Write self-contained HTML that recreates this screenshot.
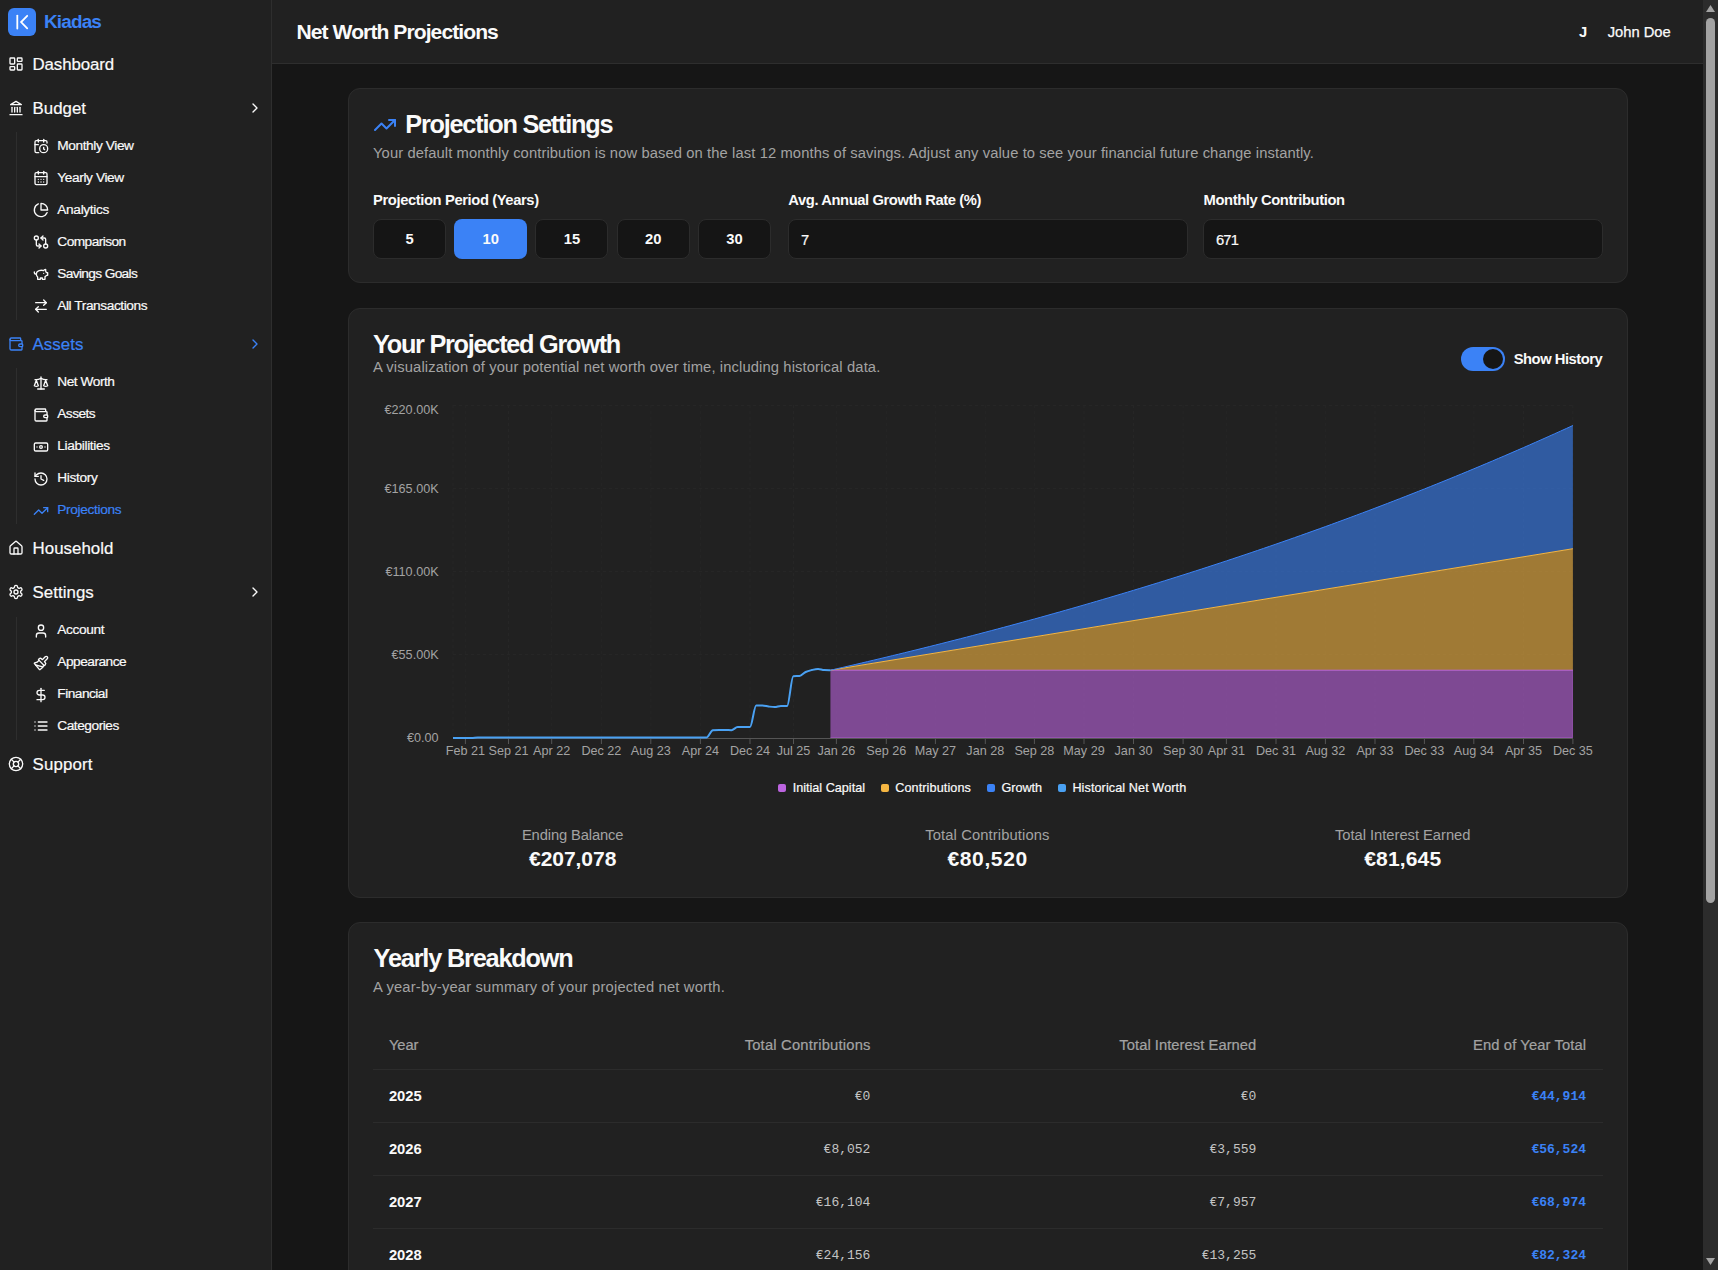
<!DOCTYPE html>
<html><head><meta charset="utf-8"><title>Net Worth Projections</title>
<style>
html,body{margin:0;padding:0;width:1718px;height:1270px;overflow:hidden;background:#161616;}
.r,.t,.i{position:absolute;}
.t{white-space:nowrap;}
</style></head><body>
<div class="r" style="left:0px;top:0px;width:271px;height:1270px;background:#212121;"></div><div class="r" style="left:271px;top:0px;width:1px;height:1270px;background:#2e2e2e;"></div><div class="r" style="left:8px;top:8px;width:28px;height:28px;background:#3b82f6;border-radius:6px;"></div><div class="r" style="left:16px;top:132px;width:1px;height:188px;background:#2e2e2e;"></div><div class="r" style="left:16px;top:368px;width:1px;height:156px;background:#2e2e2e;"></div><div class="r" style="left:16px;top:617px;width:1px;height:123px;background:#2e2e2e;"></div><div class="r" style="left:272px;top:0px;width:1431px;height:63px;background:#212121;"></div><div class="r" style="left:272px;top:63px;width:1431px;height:1px;background:#2e2e2e;"></div><div class="r" style="left:272px;top:64px;width:1431px;height:1206px;background:#161616;"></div><div class="r" style="left:1703px;top:0px;width:15px;height:1270px;background:#2c2c2c;"></div><div class="r" style="left:1706px;top:18px;width:9px;height:885px;background:#a3a3a3;border-radius:4.5px;"></div><svg class="i" style="left:1703px;top:0" width="15" height="1270"><polygon points="3,12 12,12 7.5,5" fill="#a3a3a3"/><polygon points="3,1258 12,1258 7.5,1265" fill="#a3a3a3"/></svg><div class="r" style="left:348px;top:88px;width:1280px;height:195px;background:#212121;border-radius:12px;border:1px solid #2c2c2c;box-sizing:border-box;"></div><div class="r" style="left:373px;top:219px;width:73px;height:40px;background:#151515;border-radius:8px;border:1px solid #2c2c2c;box-sizing:border-box;"></div><div class="r" style="left:454px;top:219px;width:73px;height:40px;background:#3b82f6;border-radius:8px;"></div><div class="r" style="left:535px;top:219px;width:73px;height:40px;background:#151515;border-radius:8px;border:1px solid #2c2c2c;box-sizing:border-box;"></div><div class="r" style="left:617px;top:219px;width:73px;height:40px;background:#151515;border-radius:8px;border:1px solid #2c2c2c;box-sizing:border-box;"></div><div class="r" style="left:698px;top:219px;width:73px;height:40px;background:#151515;border-radius:8px;border:1px solid #2c2c2c;box-sizing:border-box;"></div><div class="r" style="left:788px;top:219px;width:400px;height:40px;background:#151515;border-radius:8px;border:1px solid #2c2c2c;box-sizing:border-box;"></div><div class="r" style="left:1203px;top:219px;width:400px;height:40px;background:#151515;border-radius:8px;border:1px solid #2c2c2c;box-sizing:border-box;"></div><div class="r" style="left:348px;top:308px;width:1280px;height:590px;background:#212121;border-radius:12px;border:1px solid #2c2c2c;box-sizing:border-box;"></div><div class="r" style="left:1461px;top:347px;width:44px;height:24px;background:#3b82f6;border-radius:12px;"></div><div class="r" style="left:1483px;top:349px;width:20px;height:20px;background:#161616;border-radius:10px;"></div><svg class="i" style="left:0;top:0" width="1718" height="1270"><line x1="453" x2="1573" y1="405.5" y2="405.5" stroke="#262626" stroke-dasharray="3 3"/><line x1="453" x2="1573" y1="488.5" y2="488.5" stroke="#262626" stroke-dasharray="3 3"/><line x1="453" x2="1573" y1="571.5" y2="571.5" stroke="#262626" stroke-dasharray="3 3"/><line x1="453" x2="1573" y1="654.5" y2="654.5" stroke="#262626" stroke-dasharray="3 3"/><line x1="453.0" x2="453.0" y1="405" y2="738" stroke="#262626" stroke-dasharray="3 3"/><line x1="465.4" x2="465.4" y1="405" y2="738" stroke="#262626" stroke-dasharray="3 3"/><line x1="508.5" x2="508.5" y1="405" y2="738" stroke="#262626" stroke-dasharray="3 3"/><line x1="551.7" x2="551.7" y1="405" y2="738" stroke="#262626" stroke-dasharray="3 3"/><line x1="601.4" x2="601.4" y1="405" y2="738" stroke="#262626" stroke-dasharray="3 3"/><line x1="650.8" x2="650.8" y1="405" y2="738" stroke="#262626" stroke-dasharray="3 3"/><line x1="700.4" x2="700.4" y1="405" y2="738" stroke="#262626" stroke-dasharray="3 3"/><line x1="750.0" x2="750.0" y1="405" y2="738" stroke="#262626" stroke-dasharray="3 3"/><line x1="793.5" x2="793.5" y1="405" y2="738" stroke="#262626" stroke-dasharray="3 3"/><line x1="836.4" x2="836.4" y1="405" y2="738" stroke="#262626" stroke-dasharray="3 3"/><line x1="886.3" x2="886.3" y1="405" y2="738" stroke="#262626" stroke-dasharray="3 3"/><line x1="935.4" x2="935.4" y1="405" y2="738" stroke="#262626" stroke-dasharray="3 3"/><line x1="985.3" x2="985.3" y1="405" y2="738" stroke="#262626" stroke-dasharray="3 3"/><line x1="1034.4" x2="1034.4" y1="405" y2="738" stroke="#262626" stroke-dasharray="3 3"/><line x1="1084.0" x2="1084.0" y1="405" y2="738" stroke="#262626" stroke-dasharray="3 3"/><line x1="1133.5" x2="1133.5" y1="405" y2="738" stroke="#262626" stroke-dasharray="3 3"/><line x1="1183.1" x2="1183.1" y1="405" y2="738" stroke="#262626" stroke-dasharray="3 3"/><line x1="1226.4" x2="1226.4" y1="405" y2="738" stroke="#262626" stroke-dasharray="3 3"/><line x1="1276.0" x2="1276.0" y1="405" y2="738" stroke="#262626" stroke-dasharray="3 3"/><line x1="1325.4" x2="1325.4" y1="405" y2="738" stroke="#262626" stroke-dasharray="3 3"/><line x1="1375.0" x2="1375.0" y1="405" y2="738" stroke="#262626" stroke-dasharray="3 3"/><line x1="1424.4" x2="1424.4" y1="405" y2="738" stroke="#262626" stroke-dasharray="3 3"/><line x1="1473.8" x2="1473.8" y1="405" y2="738" stroke="#262626" stroke-dasharray="3 3"/><line x1="1523.5" x2="1523.5" y1="405" y2="738" stroke="#262626" stroke-dasharray="3 3"/><line x1="1572.9" x2="1572.9" y1="405" y2="738" stroke="#262626" stroke-dasharray="3 3"/><path d="M830.42,738 L830.42,670.22 L1572.90,670.22 L1572.90,738Z" fill="#bc64e0" fill-opacity="0.6"/><path d="M830.42,670.22 L830.42,670.22 L836.61,669.21 L842.80,668.20 L848.99,667.18 L855.17,666.17 L861.36,665.16 L867.55,664.15 L873.74,663.13 L879.92,662.12 L886.11,661.11 L892.30,660.09 L898.49,659.08 L904.67,658.07 L910.86,657.06 L917.05,656.04 L923.23,655.03 L929.42,654.02 L935.61,653.01 L941.80,651.99 L947.98,650.98 L954.17,649.97 L960.36,648.96 L966.55,647.94 L972.73,646.93 L978.92,645.92 L985.11,644.91 L991.29,643.89 L997.48,642.88 L1003.67,641.87 L1009.86,640.86 L1016.04,639.84 L1022.23,638.83 L1028.42,637.82 L1034.61,636.80 L1040.79,635.79 L1046.98,634.78 L1053.17,633.77 L1059.35,632.75 L1065.54,631.74 L1071.73,630.73 L1077.92,629.72 L1084.10,628.70 L1090.29,627.69 L1096.48,626.68 L1102.67,625.67 L1108.85,624.65 L1115.04,623.64 L1121.23,622.63 L1127.41,621.62 L1133.60,620.60 L1139.79,619.59 L1145.98,618.58 L1152.16,617.57 L1158.35,616.55 L1164.54,615.54 L1170.73,614.53 L1176.91,613.52 L1183.10,612.50 L1189.29,611.49 L1195.48,610.48 L1201.66,609.46 L1207.85,608.45 L1214.04,607.44 L1220.22,606.43 L1226.41,605.41 L1232.60,604.40 L1238.79,603.39 L1244.97,602.38 L1251.16,601.36 L1257.35,600.35 L1263.54,599.34 L1269.72,598.33 L1275.91,597.31 L1282.10,596.30 L1288.28,595.29 L1294.47,594.28 L1300.66,593.26 L1306.85,592.25 L1313.03,591.24 L1319.22,590.23 L1325.41,589.21 L1331.60,588.20 L1337.78,587.19 L1343.97,586.17 L1350.16,585.16 L1356.34,584.15 L1362.53,583.14 L1368.72,582.12 L1374.91,581.11 L1381.09,580.10 L1387.28,579.09 L1393.47,578.07 L1399.66,577.06 L1405.84,576.05 L1412.03,575.04 L1418.22,574.02 L1424.40,573.01 L1430.59,572.00 L1436.78,570.99 L1442.97,569.97 L1449.15,568.96 L1455.34,567.95 L1461.53,566.94 L1467.72,565.92 L1473.90,564.91 L1480.09,563.90 L1486.28,562.89 L1492.47,561.87 L1498.65,560.86 L1504.84,559.85 L1511.03,558.83 L1517.21,557.82 L1523.40,556.81 L1529.59,555.80 L1535.78,554.78 L1541.96,553.77 L1548.15,552.76 L1554.34,551.75 L1560.53,550.73 L1566.71,549.72 L1572.90,548.71 L1572.90,670.22Z" fill="#f5b642" fill-opacity="0.6"/><path d="M830.42,670.22C832.49,669.75 834.55,669.28 836.61,668.81C838.67,668.33 840.74,667.86 842.80,667.38C844.86,666.91 846.92,666.43 848.99,665.95C851.05,665.48 853.11,665.00 855.17,664.52C857.24,664.03 859.30,663.55 861.36,663.07C863.42,662.58 865.49,662.10 867.55,661.61C869.61,661.13 871.67,660.64 873.74,660.15C875.80,659.66 877.86,659.17 879.92,658.68C881.99,658.18 884.05,657.69 886.11,657.19C888.17,656.70 890.24,656.20 892.30,655.70C894.36,655.21 896.42,654.71 898.49,654.21C900.55,653.71 902.61,653.20 904.67,652.70C906.73,652.20 908.80,651.69 910.86,651.18C912.92,650.68 914.98,650.17 917.05,649.66C919.11,649.15 921.17,648.64 923.23,648.12C925.30,647.61 927.36,647.10 929.42,646.58C931.48,646.07 933.55,645.55 935.61,645.03C937.67,644.51 939.73,643.99 941.80,643.47C943.86,642.95 945.92,642.42 947.98,641.90C950.05,641.37 952.11,640.85 954.17,640.32C956.23,639.79 958.30,639.26 960.36,638.73C962.42,638.20 964.48,637.67 966.55,637.13C968.61,636.60 970.67,636.06 972.73,635.53C974.80,634.99 976.86,634.45 978.92,633.91C980.98,633.37 983.04,632.83 985.11,632.28C987.17,631.74 989.23,631.20 991.29,630.65C993.36,630.10 995.42,629.55 997.48,629.01C999.54,628.46 1001.61,627.90 1003.67,627.35C1005.73,626.80 1007.79,626.24 1009.86,625.69C1011.92,625.13 1013.98,624.57 1016.04,624.01C1018.11,623.45 1020.17,622.89 1022.23,622.33C1024.29,621.77 1026.36,621.20 1028.42,620.64C1030.48,620.07 1032.54,619.50 1034.61,618.93C1036.67,618.36 1038.73,617.79 1040.79,617.22C1042.86,616.65 1044.92,616.07 1046.98,615.50C1049.04,614.92 1051.10,614.34 1053.17,613.76C1055.23,613.18 1057.29,612.60 1059.35,612.02C1061.42,611.44 1063.48,610.85 1065.54,610.27C1067.60,609.68 1069.67,609.09 1071.73,608.50C1073.79,607.91 1075.85,607.32 1077.92,606.73C1079.98,606.14 1082.04,605.54 1084.10,604.95C1086.17,604.35 1088.23,603.75 1090.29,603.15C1092.35,602.55 1094.42,601.95 1096.48,601.35C1098.54,600.74 1100.60,600.14 1102.67,599.53C1104.73,598.92 1106.79,598.31 1108.85,597.70C1110.92,597.09 1112.98,596.48 1115.04,595.87C1117.10,595.25 1119.17,594.64 1121.23,594.02C1123.29,593.40 1125.35,592.78 1127.41,592.16C1129.48,591.54 1131.54,590.92 1133.60,590.29C1135.66,589.67 1137.73,589.04 1139.79,588.41C1141.85,587.78 1143.91,587.15 1145.98,586.52C1148.04,585.89 1150.10,585.25 1152.16,584.62C1154.23,583.98 1156.29,583.34 1158.35,582.71C1160.41,582.07 1162.48,581.42 1164.54,580.78C1166.60,580.14 1168.66,579.49 1170.73,578.85C1172.79,578.20 1174.85,577.55 1176.91,576.90C1178.98,576.25 1181.04,575.59 1183.10,574.94C1185.16,574.29 1187.23,573.63 1189.29,572.97C1191.35,572.31 1193.41,571.65 1195.48,570.99C1197.54,570.33 1199.60,569.66 1201.66,569.00C1203.72,568.33 1205.79,567.66 1207.85,566.99C1209.91,566.32 1211.97,565.65 1214.04,564.98C1216.10,564.30 1218.16,563.63 1220.22,562.95C1222.29,562.27 1224.35,561.59 1226.41,560.91C1228.47,560.23 1230.54,559.54 1232.60,558.86C1234.66,558.17 1236.72,557.48 1238.79,556.79C1240.85,556.10 1242.91,555.41 1244.97,554.72C1247.04,554.02 1249.10,553.33 1251.16,552.63C1253.22,551.93 1255.29,551.23 1257.35,550.53C1259.41,549.83 1261.47,549.12 1263.54,548.42C1265.60,547.71 1267.66,547.00 1269.72,546.29C1271.79,545.58 1273.85,544.87 1275.91,544.16C1277.97,543.44 1280.03,542.73 1282.10,542.01C1284.16,541.29 1286.22,540.57 1288.28,539.85C1290.35,539.12 1292.41,538.40 1294.47,537.67C1296.53,536.94 1298.60,536.22 1300.66,535.48C1302.72,534.75 1304.78,534.02 1306.85,533.28C1308.91,532.55 1310.97,531.81 1313.03,531.07C1315.10,530.33 1317.16,529.59 1319.22,528.85C1321.28,528.10 1323.35,527.36 1325.41,526.61C1327.47,525.86 1329.53,525.11 1331.60,524.36C1333.66,523.60 1335.72,522.85 1337.78,522.09C1339.85,521.33 1341.91,520.58 1343.97,519.81C1346.03,519.05 1348.10,518.29 1350.16,517.52C1352.22,516.76 1354.28,515.99 1356.34,515.22C1358.41,514.45 1360.47,513.67 1362.53,512.90C1364.59,512.12 1366.66,511.35 1368.72,510.57C1370.78,509.79 1372.84,509.01 1374.91,508.22C1376.97,507.44 1379.03,506.65 1381.09,505.86C1383.16,505.08 1385.22,504.28 1387.28,503.49C1389.34,502.70 1391.41,501.90 1393.47,501.10C1395.53,500.31 1397.59,499.51 1399.66,498.70C1401.72,497.90 1403.78,497.10 1405.84,496.29C1407.91,495.48 1409.97,494.67 1412.03,493.86C1414.09,493.05 1416.16,492.24 1418.22,491.42C1420.28,490.60 1422.34,489.78 1424.40,488.96C1426.47,488.14 1428.53,487.32 1430.59,486.49C1432.65,485.66 1434.72,484.84 1436.78,484.01C1438.84,483.17 1440.90,482.34 1442.97,481.51C1445.03,480.67 1447.09,479.83 1449.15,478.99C1451.22,478.15 1453.28,477.31 1455.34,476.46C1457.40,475.62 1459.47,474.77 1461.53,473.92C1463.59,473.07 1465.65,472.21 1467.72,471.36C1469.78,470.50 1471.84,469.64 1473.90,468.78C1475.97,467.92 1478.03,467.06 1480.09,466.20C1482.15,465.33 1484.22,464.46 1486.28,463.59C1488.34,462.72 1490.40,461.85 1492.47,460.97C1494.53,460.10 1496.59,459.22 1498.65,458.34C1500.71,457.46 1502.78,456.57 1504.84,455.69C1506.90,454.80 1508.96,453.91 1511.03,453.02C1513.09,452.13 1515.15,451.24 1517.21,450.34C1519.28,449.44 1521.34,448.55 1523.40,447.64C1525.46,446.74 1527.53,445.84 1529.59,444.93C1531.65,444.03 1533.71,443.12 1535.78,442.20C1537.84,441.29 1539.90,440.38 1541.96,439.46C1544.03,438.54 1546.09,437.62 1548.15,436.70C1550.21,435.78 1552.28,434.85 1554.34,433.92C1556.40,433.00 1558.46,432.07 1560.53,431.13C1562.59,430.20 1564.65,429.26 1566.71,428.32C1568.78,427.38 1570.84,426.44 1572.90,425.50 L1572.90,548.71 L1566.71,549.72 L1560.53,550.73 L1554.34,551.75 L1548.15,552.76 L1541.96,553.77 L1535.78,554.78 L1529.59,555.80 L1523.40,556.81 L1517.21,557.82 L1511.03,558.83 L1504.84,559.85 L1498.65,560.86 L1492.47,561.87 L1486.28,562.89 L1480.09,563.90 L1473.90,564.91 L1467.72,565.92 L1461.53,566.94 L1455.34,567.95 L1449.15,568.96 L1442.97,569.97 L1436.78,570.99 L1430.59,572.00 L1424.40,573.01 L1418.22,574.02 L1412.03,575.04 L1405.84,576.05 L1399.66,577.06 L1393.47,578.07 L1387.28,579.09 L1381.09,580.10 L1374.91,581.11 L1368.72,582.12 L1362.53,583.14 L1356.34,584.15 L1350.16,585.16 L1343.97,586.17 L1337.78,587.19 L1331.60,588.20 L1325.41,589.21 L1319.22,590.23 L1313.03,591.24 L1306.85,592.25 L1300.66,593.26 L1294.47,594.28 L1288.28,595.29 L1282.10,596.30 L1275.91,597.31 L1269.72,598.33 L1263.54,599.34 L1257.35,600.35 L1251.16,601.36 L1244.97,602.38 L1238.79,603.39 L1232.60,604.40 L1226.41,605.41 L1220.22,606.43 L1214.04,607.44 L1207.85,608.45 L1201.66,609.46 L1195.48,610.48 L1189.29,611.49 L1183.10,612.50 L1176.91,613.52 L1170.73,614.53 L1164.54,615.54 L1158.35,616.55 L1152.16,617.57 L1145.98,618.58 L1139.79,619.59 L1133.60,620.60 L1127.41,621.62 L1121.23,622.63 L1115.04,623.64 L1108.85,624.65 L1102.67,625.67 L1096.48,626.68 L1090.29,627.69 L1084.10,628.70 L1077.92,629.72 L1071.73,630.73 L1065.54,631.74 L1059.35,632.75 L1053.17,633.77 L1046.98,634.78 L1040.79,635.79 L1034.61,636.80 L1028.42,637.82 L1022.23,638.83 L1016.04,639.84 L1009.86,640.86 L1003.67,641.87 L997.48,642.88 L991.29,643.89 L985.11,644.91 L978.92,645.92 L972.73,646.93 L966.55,647.94 L960.36,648.96 L954.17,649.97 L947.98,650.98 L941.80,651.99 L935.61,653.01 L929.42,654.02 L923.23,655.03 L917.05,656.04 L910.86,657.06 L904.67,658.07 L898.49,659.08 L892.30,660.09 L886.11,661.11 L879.92,662.12 L873.74,663.13 L867.55,664.15 L861.36,665.16 L855.17,666.17 L848.99,667.18 L842.80,668.20 L836.61,669.21 L830.42,670.22Z" fill="#3b82f6" fill-opacity="0.6"/><path d="M830.42,670.22 L1572.90,670.22" stroke="#bc64e0" stroke-width="1" fill="none"/><path d="M1572.40,670.22 L1572.40,737.5 L830.42,737.5" stroke="#bc64e0" stroke-opacity="0.35" stroke-width="1" fill="none"/><path d="M830.42,670.22 L1572.90,548.71" stroke="#f5b642" stroke-width="1" fill="none"/><path d="M830.42,670.22C832.49,669.75 834.55,669.28 836.61,668.81C838.67,668.33 840.74,667.86 842.80,667.38C844.86,666.91 846.92,666.43 848.99,665.95C851.05,665.48 853.11,665.00 855.17,664.52C857.24,664.03 859.30,663.55 861.36,663.07C863.42,662.58 865.49,662.10 867.55,661.61C869.61,661.13 871.67,660.64 873.74,660.15C875.80,659.66 877.86,659.17 879.92,658.68C881.99,658.18 884.05,657.69 886.11,657.19C888.17,656.70 890.24,656.20 892.30,655.70C894.36,655.21 896.42,654.71 898.49,654.21C900.55,653.71 902.61,653.20 904.67,652.70C906.73,652.20 908.80,651.69 910.86,651.18C912.92,650.68 914.98,650.17 917.05,649.66C919.11,649.15 921.17,648.64 923.23,648.12C925.30,647.61 927.36,647.10 929.42,646.58C931.48,646.07 933.55,645.55 935.61,645.03C937.67,644.51 939.73,643.99 941.80,643.47C943.86,642.95 945.92,642.42 947.98,641.90C950.05,641.37 952.11,640.85 954.17,640.32C956.23,639.79 958.30,639.26 960.36,638.73C962.42,638.20 964.48,637.67 966.55,637.13C968.61,636.60 970.67,636.06 972.73,635.53C974.80,634.99 976.86,634.45 978.92,633.91C980.98,633.37 983.04,632.83 985.11,632.28C987.17,631.74 989.23,631.20 991.29,630.65C993.36,630.10 995.42,629.55 997.48,629.01C999.54,628.46 1001.61,627.90 1003.67,627.35C1005.73,626.80 1007.79,626.24 1009.86,625.69C1011.92,625.13 1013.98,624.57 1016.04,624.01C1018.11,623.45 1020.17,622.89 1022.23,622.33C1024.29,621.77 1026.36,621.20 1028.42,620.64C1030.48,620.07 1032.54,619.50 1034.61,618.93C1036.67,618.36 1038.73,617.79 1040.79,617.22C1042.86,616.65 1044.92,616.07 1046.98,615.50C1049.04,614.92 1051.10,614.34 1053.17,613.76C1055.23,613.18 1057.29,612.60 1059.35,612.02C1061.42,611.44 1063.48,610.85 1065.54,610.27C1067.60,609.68 1069.67,609.09 1071.73,608.50C1073.79,607.91 1075.85,607.32 1077.92,606.73C1079.98,606.14 1082.04,605.54 1084.10,604.95C1086.17,604.35 1088.23,603.75 1090.29,603.15C1092.35,602.55 1094.42,601.95 1096.48,601.35C1098.54,600.74 1100.60,600.14 1102.67,599.53C1104.73,598.92 1106.79,598.31 1108.85,597.70C1110.92,597.09 1112.98,596.48 1115.04,595.87C1117.10,595.25 1119.17,594.64 1121.23,594.02C1123.29,593.40 1125.35,592.78 1127.41,592.16C1129.48,591.54 1131.54,590.92 1133.60,590.29C1135.66,589.67 1137.73,589.04 1139.79,588.41C1141.85,587.78 1143.91,587.15 1145.98,586.52C1148.04,585.89 1150.10,585.25 1152.16,584.62C1154.23,583.98 1156.29,583.34 1158.35,582.71C1160.41,582.07 1162.48,581.42 1164.54,580.78C1166.60,580.14 1168.66,579.49 1170.73,578.85C1172.79,578.20 1174.85,577.55 1176.91,576.90C1178.98,576.25 1181.04,575.59 1183.10,574.94C1185.16,574.29 1187.23,573.63 1189.29,572.97C1191.35,572.31 1193.41,571.65 1195.48,570.99C1197.54,570.33 1199.60,569.66 1201.66,569.00C1203.72,568.33 1205.79,567.66 1207.85,566.99C1209.91,566.32 1211.97,565.65 1214.04,564.98C1216.10,564.30 1218.16,563.63 1220.22,562.95C1222.29,562.27 1224.35,561.59 1226.41,560.91C1228.47,560.23 1230.54,559.54 1232.60,558.86C1234.66,558.17 1236.72,557.48 1238.79,556.79C1240.85,556.10 1242.91,555.41 1244.97,554.72C1247.04,554.02 1249.10,553.33 1251.16,552.63C1253.22,551.93 1255.29,551.23 1257.35,550.53C1259.41,549.83 1261.47,549.12 1263.54,548.42C1265.60,547.71 1267.66,547.00 1269.72,546.29C1271.79,545.58 1273.85,544.87 1275.91,544.16C1277.97,543.44 1280.03,542.73 1282.10,542.01C1284.16,541.29 1286.22,540.57 1288.28,539.85C1290.35,539.12 1292.41,538.40 1294.47,537.67C1296.53,536.94 1298.60,536.22 1300.66,535.48C1302.72,534.75 1304.78,534.02 1306.85,533.28C1308.91,532.55 1310.97,531.81 1313.03,531.07C1315.10,530.33 1317.16,529.59 1319.22,528.85C1321.28,528.10 1323.35,527.36 1325.41,526.61C1327.47,525.86 1329.53,525.11 1331.60,524.36C1333.66,523.60 1335.72,522.85 1337.78,522.09C1339.85,521.33 1341.91,520.58 1343.97,519.81C1346.03,519.05 1348.10,518.29 1350.16,517.52C1352.22,516.76 1354.28,515.99 1356.34,515.22C1358.41,514.45 1360.47,513.67 1362.53,512.90C1364.59,512.12 1366.66,511.35 1368.72,510.57C1370.78,509.79 1372.84,509.01 1374.91,508.22C1376.97,507.44 1379.03,506.65 1381.09,505.86C1383.16,505.08 1385.22,504.28 1387.28,503.49C1389.34,502.70 1391.41,501.90 1393.47,501.10C1395.53,500.31 1397.59,499.51 1399.66,498.70C1401.72,497.90 1403.78,497.10 1405.84,496.29C1407.91,495.48 1409.97,494.67 1412.03,493.86C1414.09,493.05 1416.16,492.24 1418.22,491.42C1420.28,490.60 1422.34,489.78 1424.40,488.96C1426.47,488.14 1428.53,487.32 1430.59,486.49C1432.65,485.66 1434.72,484.84 1436.78,484.01C1438.84,483.17 1440.90,482.34 1442.97,481.51C1445.03,480.67 1447.09,479.83 1449.15,478.99C1451.22,478.15 1453.28,477.31 1455.34,476.46C1457.40,475.62 1459.47,474.77 1461.53,473.92C1463.59,473.07 1465.65,472.21 1467.72,471.36C1469.78,470.50 1471.84,469.64 1473.90,468.78C1475.97,467.92 1478.03,467.06 1480.09,466.20C1482.15,465.33 1484.22,464.46 1486.28,463.59C1488.34,462.72 1490.40,461.85 1492.47,460.97C1494.53,460.10 1496.59,459.22 1498.65,458.34C1500.71,457.46 1502.78,456.57 1504.84,455.69C1506.90,454.80 1508.96,453.91 1511.03,453.02C1513.09,452.13 1515.15,451.24 1517.21,450.34C1519.28,449.44 1521.34,448.55 1523.40,447.64C1525.46,446.74 1527.53,445.84 1529.59,444.93C1531.65,444.03 1533.71,443.12 1535.78,442.20C1537.84,441.29 1539.90,440.38 1541.96,439.46C1544.03,438.54 1546.09,437.62 1548.15,436.70C1550.21,435.78 1552.28,434.85 1554.34,433.92C1556.40,433.00 1558.46,432.07 1560.53,431.13C1562.59,430.20 1564.65,429.26 1566.71,428.32C1568.78,427.38 1570.84,426.44 1572.90,425.50" stroke="#3b82f6" stroke-width="1" fill="none"/><line x1="453" x2="1573" y1="738.5" y2="738.5" stroke="#555" stroke-width="1"/><line x1="465.4" x2="465.4" y1="739" y2="744" stroke="#555" stroke-width="1"/><line x1="508.5" x2="508.5" y1="739" y2="744" stroke="#555" stroke-width="1"/><line x1="551.7" x2="551.7" y1="739" y2="744" stroke="#555" stroke-width="1"/><line x1="601.4" x2="601.4" y1="739" y2="744" stroke="#555" stroke-width="1"/><line x1="650.8" x2="650.8" y1="739" y2="744" stroke="#555" stroke-width="1"/><line x1="700.4" x2="700.4" y1="739" y2="744" stroke="#555" stroke-width="1"/><line x1="750.0" x2="750.0" y1="739" y2="744" stroke="#555" stroke-width="1"/><line x1="793.5" x2="793.5" y1="739" y2="744" stroke="#555" stroke-width="1"/><line x1="836.4" x2="836.4" y1="739" y2="744" stroke="#555" stroke-width="1"/><line x1="886.3" x2="886.3" y1="739" y2="744" stroke="#555" stroke-width="1"/><line x1="935.4" x2="935.4" y1="739" y2="744" stroke="#555" stroke-width="1"/><line x1="985.3" x2="985.3" y1="739" y2="744" stroke="#555" stroke-width="1"/><line x1="1034.4" x2="1034.4" y1="739" y2="744" stroke="#555" stroke-width="1"/><line x1="1084.0" x2="1084.0" y1="739" y2="744" stroke="#555" stroke-width="1"/><line x1="1133.5" x2="1133.5" y1="739" y2="744" stroke="#555" stroke-width="1"/><line x1="1183.1" x2="1183.1" y1="739" y2="744" stroke="#555" stroke-width="1"/><line x1="1226.4" x2="1226.4" y1="739" y2="744" stroke="#555" stroke-width="1"/><line x1="1276.0" x2="1276.0" y1="739" y2="744" stroke="#555" stroke-width="1"/><line x1="1325.4" x2="1325.4" y1="739" y2="744" stroke="#555" stroke-width="1"/><line x1="1375.0" x2="1375.0" y1="739" y2="744" stroke="#555" stroke-width="1"/><line x1="1424.4" x2="1424.4" y1="739" y2="744" stroke="#555" stroke-width="1"/><line x1="1473.8" x2="1473.8" y1="739" y2="744" stroke="#555" stroke-width="1"/><line x1="1523.5" x2="1523.5" y1="739" y2="744" stroke="#555" stroke-width="1"/><line x1="1572.9" x2="1572.9" y1="739" y2="744" stroke="#555" stroke-width="1"/><path d="M453.00,738.00C455.06,738.00 457.12,738.00 459.19,738.00C461.25,738.00 463.31,738.00 465.37,738.00C467.44,738.00 469.50,738.00 471.56,738.00C473.62,738.00 475.69,737.60 477.75,737.60C479.81,737.60 481.87,737.60 483.94,737.60C486.00,737.60 488.06,737.60 490.12,737.60C492.19,737.60 494.25,737.60 496.31,737.60C498.37,737.60 500.44,737.60 502.50,737.60C504.56,737.60 506.62,737.60 508.69,737.60C510.75,737.60 512.81,737.60 514.87,737.60C516.94,737.60 519.00,737.60 521.06,737.60C523.12,737.60 525.19,737.60 527.25,737.60C529.31,737.60 531.37,737.60 533.43,737.60C535.50,737.60 537.56,737.60 539.62,737.60C541.68,737.60 543.75,737.60 545.81,737.60C547.87,737.60 549.93,737.60 552.00,737.60C554.06,737.60 556.12,737.60 558.18,737.60C560.25,737.60 562.31,737.60 564.37,737.60C566.43,737.60 568.50,737.60 570.56,737.60C572.62,737.60 574.68,737.60 576.75,737.60C578.81,737.60 580.87,737.60 582.93,737.60C585.00,737.60 587.06,737.60 589.12,737.60C591.18,737.60 593.25,737.60 595.31,737.60C597.37,737.60 599.43,737.60 601.50,737.60C603.56,737.60 605.62,737.60 607.68,737.60C609.74,737.60 611.81,737.60 613.87,737.60C615.93,737.60 617.99,737.60 620.06,737.60C622.12,737.60 624.18,737.60 626.24,737.60C628.31,737.60 630.37,737.60 632.43,737.60C634.49,737.60 636.56,737.60 638.62,737.60C640.68,737.60 642.74,737.60 644.81,737.60C646.87,737.60 648.93,737.60 650.99,737.60C653.06,737.60 655.12,737.60 657.18,737.60C659.24,737.60 661.31,737.60 663.37,737.60C665.43,737.60 667.49,737.60 669.56,737.60C671.62,737.60 673.68,737.60 675.74,737.60C677.80,737.60 679.87,737.60 681.93,737.60C683.99,737.60 686.05,737.60 688.12,737.60C690.18,737.60 692.24,737.60 694.30,737.60C696.37,737.60 698.43,737.60 700.49,737.60C702.55,737.60 704.62,737.57 706.68,737.50C708.74,737.43 710.80,730.33 712.87,730.20C714.93,730.07 716.99,730.00 719.05,730.00C721.12,730.00 723.18,730.00 725.24,730.00C727.30,730.00 729.37,730.20 731.43,730.20C733.49,730.20 735.55,727.00 737.62,727.00C739.68,727.00 741.74,727.00 743.80,727.00C745.87,727.00 747.93,727.00 749.99,727.00C752.05,727.00 754.11,705.50 756.18,705.50C758.24,705.50 760.30,705.50 762.36,705.50C764.43,705.50 766.49,706.23 768.55,706.50C770.61,706.77 772.68,707.10 774.74,707.10C776.80,707.10 778.86,706.00 780.93,706.00C782.99,706.00 785.05,706.00 787.11,706.00C789.18,706.00 791.24,676.33 793.30,676.20C795.36,676.07 797.43,676.13 799.49,676.00C801.55,675.87 803.61,673.00 805.68,672.00C807.74,671.00 809.80,670.52 811.86,670.00C813.93,669.48 815.99,668.90 818.05,668.90C820.11,668.90 822.18,670.03 824.24,670.10C826.30,670.17 828.36,670.18 830.42,670.20" stroke="#4aa1f3" stroke-width="2" fill="none"/></svg><div class="r" style="left:778px;top:784px;width:8px;height:8px;background:#bc64e0;border-radius:2px;"></div><div class="r" style="left:881px;top:784px;width:8px;height:8px;background:#f5b642;border-radius:2px;"></div><div class="r" style="left:987px;top:784px;width:8px;height:8px;background:#3b82f6;border-radius:2px;"></div><div class="r" style="left:1058px;top:784px;width:8px;height:8px;background:#4aa1f3;border-radius:2px;"></div><div class="r" style="left:348px;top:922px;width:1280px;height:478px;background:#212121;border-radius:12px;border:1px solid #2c2c2c;box-sizing:border-box;"></div><div class="r" style="left:373px;top:1069px;width:1230px;height:1px;background:#2c2c2c;"></div><div class="r" style="left:373px;top:1122px;width:1230px;height:1px;background:#2c2c2c;"></div><div class="r" style="left:373px;top:1175px;width:1230px;height:1px;background:#2c2c2c;"></div><div class="r" style="left:373px;top:1228px;width:1230px;height:1px;background:#2c2c2c;"></div>
<svg class="i" style="left:8px;top:8px" width="28" height="28" viewBox="0 0 28 28" fill="none" stroke="#fff" stroke-width="1.8" stroke-linecap="round" stroke-linejoin="miter"><path d="M9.3 7.6v13"/><path d="M19.2 7.8 13.1 14.1l6.1 6.3"/></svg><svg class="i" style="left:8px;top:56px" width="16" height="16" viewBox="0 0 24 24" fill="none" stroke="#fafafa" stroke-width="2" stroke-linecap="round" stroke-linejoin="round"><rect width="7" height="9" x="3" y="3" rx="1"/><rect width="7" height="5" x="14" y="3" rx="1"/><rect width="7" height="9" x="14" y="12" rx="1"/><rect width="7" height="5" x="3" y="16" rx="1"/></svg><svg class="i" style="left:8px;top:100px" width="16" height="16" viewBox="0 0 24 24" fill="none" stroke="#fafafa" stroke-width="2" stroke-linecap="round" stroke-linejoin="round"><line x1="3" x2="21" y1="22" y2="22"/><line x1="6" x2="6" y1="18" y2="11"/><line x1="10" x2="10" y1="18" y2="11"/><line x1="14" x2="14" y1="18" y2="11"/><line x1="18" x2="18" y1="18" y2="11"/><polygon points="12 2 20 7 4 7"/></svg><svg class="i" style="left:247px;top:100px" width="16" height="16" viewBox="0 0 24 24" fill="none" stroke="#fafafa" stroke-width="2" stroke-linecap="round" stroke-linejoin="round"><path d="m9 18 6-6-6-6"/></svg><svg class="i" style="left:33px;top:138px" width="16" height="16" viewBox="0 0 24 24" fill="none" stroke="#fafafa" stroke-width="2" stroke-linecap="round" stroke-linejoin="round"><path d="M21 7.5V6a2 2 0 0 0-2-2H5a2 2 0 0 0-2 2v14a2 2 0 0 0 2 2h3.5"/><path d="M16 2v4"/><path d="M8 2v4"/><path d="M3 10h5"/><path d="M17.5 17.5 16 16.3V14"/><circle cx="16" cy="16" r="6"/></svg><svg class="i" style="left:33px;top:170px" width="16" height="16" viewBox="0 0 24 24" fill="none" stroke="#fafafa" stroke-width="2" stroke-linecap="round" stroke-linejoin="round"><rect width="18" height="18" x="3" y="4" rx="2"/><path d="M16 2v4"/><path d="M8 2v4"/><path d="M3 10h18"/><path d="M8 14h.01"/><path d="M12 14h.01"/><path d="M16 14h.01"/><path d="M8 18h.01"/><path d="M12 18h.01"/><path d="M16 18h.01"/></svg><svg class="i" style="left:33px;top:202px" width="16" height="16" viewBox="0 0 24 24" fill="none" stroke="#fafafa" stroke-width="2" stroke-linecap="round" stroke-linejoin="round"><path d="M21.21 15.89A10 10 0 1 1 8 2.83"/><path d="M22 12A10 10 0 0 0 12 2v10z"/></svg><svg class="i" style="left:33px;top:234px" width="16" height="16" viewBox="0 0 24 24" fill="none" stroke="#fafafa" stroke-width="2" stroke-linecap="round" stroke-linejoin="round"><circle cx="5" cy="6" r="3"/><path d="M12 6h5a2 2 0 0 1 2 2v7"/><path d="m15 9-3-3 3-3"/><circle cx="19" cy="18" r="3"/><path d="M12 18H7a2 2 0 0 1-2-2V9"/><path d="m9 15 3 3-3 3"/></svg><svg class="i" style="left:33px;top:266px" width="16" height="16" viewBox="0 0 24 24" fill="none" stroke="#fafafa" stroke-width="2" stroke-linecap="round" stroke-linejoin="round"><path d="M19 5c-1.5 0-2.8 1.4-3 2-3.5-1.5-11-.3-11 5 0 1.8 0 3 2 4.5V20h4v-2h3v2h4v-4c1-.5 1.7-1 2-2h2v-4h-2c0-1-.5-1.5-1-2V5z"/><path d="M2 9v1c0 1.1.9 2 2 2h1"/><path d="M16 11h.01"/></svg><svg class="i" style="left:33px;top:298px" width="16" height="16" viewBox="0 0 24 24" fill="none" stroke="#fafafa" stroke-width="2" stroke-linecap="round" stroke-linejoin="round"><path d="m16 3 4 4-4 4"/><path d="M20 7H4"/><path d="m8 21-4-4 4-4"/><path d="M4 17h16"/></svg><svg class="i" style="left:8px;top:336px" width="16" height="16" viewBox="0 0 24 24" fill="none" stroke="#3b82f6" stroke-width="2" stroke-linecap="round" stroke-linejoin="round"><path d="M19 7V4a1 1 0 0 0-1-1H5a2 2 0 0 0 0 4h15a1 1 0 0 1 1 1v4h-3a2 2 0 0 0 0 4h3a1 1 0 0 0 1-1v-2a1 1 0 0 0-1-1"/><path d="M3 5v14a2 2 0 0 0 2 2h15a1 1 0 0 0 1-1v-4"/></svg><svg class="i" style="left:247px;top:336px" width="16" height="16" viewBox="0 0 24 24" fill="none" stroke="#3b82f6" stroke-width="2" stroke-linecap="round" stroke-linejoin="round"><path d="m9 18 6-6-6-6"/></svg><svg class="i" style="left:33px;top:375px" width="16" height="16" viewBox="0 0 24 24" fill="none" stroke="#fafafa" stroke-width="2" stroke-linecap="round" stroke-linejoin="round"><path d="m16 16 3-8 3 8c-.87.65-1.92 1-3 1s-2.13-.35-3-1Z"/><path d="m2 16 3-8 3 8c-.87.65-1.92 1-3 1s-2.13-.35-3-1Z"/><path d="M7 21h10"/><path d="M12 3v18"/><path d="M3 7h2c2 0 5-1 7-2 2 1 5 2 7 2h2"/></svg><svg class="i" style="left:33px;top:407px" width="16" height="16" viewBox="0 0 24 24" fill="none" stroke="#fafafa" stroke-width="2" stroke-linecap="round" stroke-linejoin="round"><path d="M19 7V4a1 1 0 0 0-1-1H5a2 2 0 0 0 0 4h15a1 1 0 0 1 1 1v4h-3a2 2 0 0 0 0 4h3a1 1 0 0 0 1-1v-2a1 1 0 0 0-1-1"/><path d="M3 5v14a2 2 0 0 0 2 2h15a1 1 0 0 0 1-1v-4"/></svg><svg class="i" style="left:33px;top:439px" width="16" height="16" viewBox="0 0 24 24" fill="none" stroke="#fafafa" stroke-width="2" stroke-linecap="round" stroke-linejoin="round"><rect width="20" height="12" x="2" y="6" rx="2"/><circle cx="12" cy="12" r="2"/><path d="M6 12h.01M18 12h.01"/></svg><svg class="i" style="left:33px;top:471px" width="16" height="16" viewBox="0 0 24 24" fill="none" stroke="#fafafa" stroke-width="2" stroke-linecap="round" stroke-linejoin="round"><path d="M3 12a9 9 0 1 0 9-9 9.75 9.75 0 0 0-6.74 2.74L3 8"/><path d="M3 3v5h5"/><path d="M12 7v5l4 2"/></svg><svg class="i" style="left:33px;top:503px" width="16" height="16" viewBox="0 0 24 24" fill="none" stroke="#3b82f6" stroke-width="2" stroke-linecap="round" stroke-linejoin="round"><polyline points="22 7 13.5 15.5 8.5 10.5 2 17"/><polyline points="16 7 22 7 22 13"/></svg><svg class="i" style="left:8px;top:540px" width="16" height="16" viewBox="0 0 24 24" fill="none" stroke="#fafafa" stroke-width="2" stroke-linecap="round" stroke-linejoin="round"><path d="M15 21v-8a1 1 0 0 0-1-1h-4a1 1 0 0 0-1 1v8"/><path d="M3 10a2 2 0 0 1 .709-1.528l7-5.999a2 2 0 0 1 2.582 0l7 5.999A2 2 0 0 1 21 10v9a2 2 0 0 1-2 2H5a2 2 0 0 1-2-2z"/></svg><svg class="i" style="left:8px;top:584px" width="16" height="16" viewBox="0 0 24 24" fill="none" stroke="#fafafa" stroke-width="2" stroke-linecap="round" stroke-linejoin="round"><path d="M12.22 2h-.44a2 2 0 0 0-2 2v.18a2 2 0 0 1-1 1.73l-.43.25a2 2 0 0 1-2 0l-.15-.08a2 2 0 0 0-2.73.73l-.22.38a2 2 0 0 0 .73 2.73l.15.1a2 2 0 0 1 1 1.72v.51a2 2 0 0 1-1 1.74l-.15.09a2 2 0 0 0-.73 2.73l.22.38a2 2 0 0 0 2.73.73l.15-.08a2 2 0 0 1 2 0l.43.25a2 2 0 0 1 1 1.73V20a2 2 0 0 0 2 2h.44a2 2 0 0 0 2-2v-.18a2 2 0 0 1 1-1.73l.43-.25a2 2 0 0 1 2 0l.15.08a2 2 0 0 0 2.73-.73l.22-.39a2 2 0 0 0-.73-2.73l-.15-.08a2 2 0 0 1-1-1.74v-.5a2 2 0 0 1 1-1.74l.15-.09a2 2 0 0 0 .73-2.73l-.22-.38a2 2 0 0 0-2.73-.73l-.15.08a2 2 0 0 1-2 0l-.43-.25a2 2 0 0 1-1-1.73V4a2 2 0 0 0-2-2z"/><circle cx="12" cy="12" r="3"/></svg><svg class="i" style="left:247px;top:584px" width="16" height="16" viewBox="0 0 24 24" fill="none" stroke="#fafafa" stroke-width="2" stroke-linecap="round" stroke-linejoin="round"><path d="m9 18 6-6-6-6"/></svg><svg class="i" style="left:33px;top:623px" width="16" height="16" viewBox="0 0 24 24" fill="none" stroke="#fafafa" stroke-width="2" stroke-linecap="round" stroke-linejoin="round"><path d="M19 21v-2a4 4 0 0 0-4-4H9a4 4 0 0 0-4 4v2"/><circle cx="12" cy="7" r="4"/></svg><svg class="i" style="left:33px;top:655px" width="16" height="16" viewBox="0 0 24 24" fill="none" stroke="#fafafa" stroke-width="2" stroke-linecap="round" stroke-linejoin="round"><path d="m14.622 17.897-10.68-2.913"/><path d="M18.376 2.622a1 1 0 1 1 3.002 3.002L17.36 9.643a.5.5 0 0 0 0 .707l.944.944a2.41 2.41 0 0 1 0 3.408l-.944.944a.5.5 0 0 1-.707 0L8.354 7.348a.5.5 0 0 1 0-.707l.944-.944a2.41 2.41 0 0 1 3.408 0l.944.944a.5.5 0 0 0 .707 0z"/><path d="M9 8c-1.804 2.71-3.97 3.46-6.583 3.948a.507.507 0 0 0-.302.819l7.32 8.883a1 1 0 0 0 1.185.204C12.735 20.405 16 16.792 16 15"/></svg><svg class="i" style="left:33px;top:687px" width="16" height="16" viewBox="0 0 24 24" fill="none" stroke="#fafafa" stroke-width="2" stroke-linecap="round" stroke-linejoin="round"><line x1="12" x2="12" y1="2" y2="22"/><path d="M17 5H9.5a3.5 3.5 0 0 0 0 7h5a3.5 3.5 0 0 1 0 7H6"/></svg><svg class="i" style="left:33px;top:718px" width="16" height="16" viewBox="0 0 24 24" fill="none" stroke="#fafafa" stroke-width="2" stroke-linecap="round" stroke-linejoin="round"><path d="M3 12h.01"/><path d="M3 18h.01"/><path d="M3 6h.01"/><path d="M8 12h13"/><path d="M8 18h13"/><path d="M8 6h13"/></svg><svg class="i" style="left:8px;top:756px" width="16" height="16" viewBox="0 0 24 24" fill="none" stroke="#fafafa" stroke-width="2" stroke-linecap="round" stroke-linejoin="round"><circle cx="12" cy="12" r="10"/><path d="m4.93 4.93 4.24 4.24"/><path d="m14.83 9.17 4.24-4.24"/><path d="m14.83 14.83 4.24 4.24"/><path d="m9.17 14.83-4.24 4.24"/><circle cx="12" cy="12" r="4"/></svg><svg class="i" style="left:373px;top:113px" width="24" height="24" viewBox="0 0 24 24" fill="none" stroke="#3b82f6" stroke-width="2" stroke-linecap="round" stroke-linejoin="round"><polyline points="22 7 13.5 15.5 8.5 10.5 2 17"/><polyline points="16 7 22 7 22 13"/></svg>
<div class="t" style="font-family:'Liberation Sans';font-size:18.97px;line-height:18.97px;font-weight:700;color:#3b82f6;top:13.00px;letter-spacing:-0.859px;left:44.00px;">Kiadas</div><div class="t" style="font-family:'Liberation Sans';font-size:16.86px;line-height:16.86px;font-weight:400;color:#fafafa;top:57.00px;letter-spacing:-0.109px;-webkit-text-stroke:0.2px #fafafa;left:32.50px;">Dashboard</div><div class="t" style="font-family:'Liberation Sans';font-size:16.86px;line-height:16.86px;font-weight:400;color:#fafafa;top:101.00px;letter-spacing:0.010px;-webkit-text-stroke:0.2px #fafafa;left:32.50px;">Budget</div><div class="t" style="font-family:'Liberation Sans';font-size:13.7px;line-height:13.7px;font-weight:400;color:#fafafa;top:139.00px;letter-spacing:-0.405px;-webkit-text-stroke:0.2px #fafafa;left:57.30px;">Monthly View</div><div class="t" style="font-family:'Liberation Sans';font-size:13.7px;line-height:13.7px;font-weight:400;color:#fafafa;top:171.00px;letter-spacing:-0.388px;-webkit-text-stroke:0.2px #fafafa;left:57.30px;">Yearly View</div><div class="t" style="font-family:'Liberation Sans';font-size:13.7px;line-height:13.7px;font-weight:400;color:#fafafa;top:203.00px;letter-spacing:-0.342px;-webkit-text-stroke:0.2px #fafafa;left:57.30px;">Analytics</div><div class="t" style="font-family:'Liberation Sans';font-size:13.7px;line-height:13.7px;font-weight:400;color:#fafafa;top:235.00px;letter-spacing:-0.540px;-webkit-text-stroke:0.2px #fafafa;left:57.30px;">Comparison</div><div class="t" style="font-family:'Liberation Sans';font-size:13.7px;line-height:13.7px;font-weight:400;color:#fafafa;top:267.00px;letter-spacing:-0.644px;-webkit-text-stroke:0.2px #fafafa;left:57.30px;">Savings Goals</div><div class="t" style="font-family:'Liberation Sans';font-size:13.7px;line-height:13.7px;font-weight:400;color:#fafafa;top:299.00px;letter-spacing:-0.427px;-webkit-text-stroke:0.2px #fafafa;left:57.30px;">All Transactions</div><div class="t" style="font-family:'Liberation Sans';font-size:16.86px;line-height:16.86px;font-weight:400;color:#3b82f6;top:337.00px;letter-spacing:0.065px;-webkit-text-stroke:0.2px #3b82f6;left:32.50px;">Assets</div><div class="t" style="font-family:'Liberation Sans';font-size:13.7px;line-height:13.7px;font-weight:400;color:#fafafa;top:375.00px;letter-spacing:-0.464px;-webkit-text-stroke:0.2px #fafafa;left:57.30px;">Net Worth</div><div class="t" style="font-family:'Liberation Sans';font-size:13.7px;line-height:13.7px;font-weight:400;color:#fafafa;top:407.00px;letter-spacing:-0.563px;-webkit-text-stroke:0.2px #fafafa;left:57.30px;">Assets</div><div class="t" style="font-family:'Liberation Sans';font-size:13.7px;line-height:13.7px;font-weight:400;color:#fafafa;top:439.00px;letter-spacing:-0.347px;-webkit-text-stroke:0.2px #fafafa;left:57.30px;">Liabilities</div><div class="t" style="font-family:'Liberation Sans';font-size:13.7px;line-height:13.7px;font-weight:400;color:#fafafa;top:471.00px;letter-spacing:-0.328px;-webkit-text-stroke:0.2px #fafafa;left:57.30px;">History</div><div class="t" style="font-family:'Liberation Sans';font-size:13.7px;line-height:13.7px;font-weight:400;color:#3b82f6;top:503.00px;letter-spacing:-0.338px;-webkit-text-stroke:0.2px #3b82f6;left:57.30px;">Projections</div><div class="t" style="font-family:'Liberation Sans';font-size:16.86px;line-height:16.86px;font-weight:400;color:#fafafa;top:541.00px;letter-spacing:0.043px;-webkit-text-stroke:0.2px #fafafa;left:32.50px;">Household</div><div class="t" style="font-family:'Liberation Sans';font-size:16.86px;line-height:16.86px;font-weight:400;color:#fafafa;top:585.00px;letter-spacing:0.047px;-webkit-text-stroke:0.2px #fafafa;left:32.50px;">Settings</div><div class="t" style="font-family:'Liberation Sans';font-size:13.7px;line-height:13.7px;font-weight:400;color:#fafafa;top:623.00px;letter-spacing:-0.381px;-webkit-text-stroke:0.2px #fafafa;left:57.30px;">Account</div><div class="t" style="font-family:'Liberation Sans';font-size:13.7px;line-height:13.7px;font-weight:400;color:#fafafa;top:655.00px;letter-spacing:-0.493px;-webkit-text-stroke:0.2px #fafafa;left:57.30px;">Appearance</div><div class="t" style="font-family:'Liberation Sans';font-size:13.7px;line-height:13.7px;font-weight:400;color:#fafafa;top:687.00px;letter-spacing:-0.509px;-webkit-text-stroke:0.2px #fafafa;left:57.30px;">Financial</div><div class="t" style="font-family:'Liberation Sans';font-size:13.7px;line-height:13.7px;font-weight:400;color:#fafafa;top:719.00px;letter-spacing:-0.460px;-webkit-text-stroke:0.2px #fafafa;left:57.30px;">Categories</div><div class="t" style="font-family:'Liberation Sans';font-size:16.86px;line-height:16.86px;font-weight:400;color:#fafafa;top:757.00px;letter-spacing:0.134px;-webkit-text-stroke:0.2px #fafafa;left:32.50px;">Support</div><div class="t" style="font-family:'Liberation Sans';font-size:21.07px;line-height:21.07px;font-weight:700;color:#fafafa;top:21.00px;letter-spacing:-0.924px;left:296.50px;">Net Worth Projections</div><div class="t" style="font-family:'Liberation Sans';font-size:14.75px;line-height:14.75px;font-weight:700;color:#fafafa;top:25.00px;letter-spacing:-0.219px;left:1579.00px;">J</div><div class="t" style="font-family:'Liberation Sans';font-size:14.75px;line-height:14.75px;font-weight:400;color:#fafafa;top:25.00px;letter-spacing:-0.020px;-webkit-text-stroke:0.25px #fafafa;left:1607.70px;">John Doe</div><div class="t" style="font-family:'Liberation Sans';font-size:25.29px;line-height:25.29px;font-weight:700;color:#fafafa;top:112.00px;letter-spacing:-1.230px;left:405.30px;">Projection Settings</div><div class="t" style="font-family:'Liberation Sans';font-size:14.75px;line-height:14.75px;font-weight:400;color:#a3a3a3;top:146.00px;letter-spacing:0.100px;left:373.00px;">Your default monthly contribution is now based on the last 12 months of savings. Adjust any value to see your financial future change instantly.</div><div class="t" style="font-family:'Liberation Sans';font-size:14.75px;line-height:14.75px;font-weight:700;color:#fafafa;top:193.00px;letter-spacing:-0.389px;left:373.00px;">Projection Period (Years)</div><div class="t" style="font-family:'Liberation Sans';font-size:14.75px;line-height:14.75px;font-weight:700;color:#fafafa;top:193.00px;letter-spacing:-0.410px;left:788.30px;">Avg. Annual Growth Rate (%)</div><div class="t" style="font-family:'Liberation Sans';font-size:14.75px;line-height:14.75px;font-weight:700;color:#fafafa;top:193.00px;letter-spacing:-0.405px;left:1203.60px;">Monthly Contribution</div><div class="t" style="font-family:'Liberation Sans';font-size:14.75px;line-height:14.75px;font-weight:700;color:#fafafa;top:232.00px;left:-590.40px;width:2000px;text-align:center;">5</div><div class="t" style="font-family:'Liberation Sans';font-size:14.75px;line-height:14.75px;font-weight:700;color:#fafafa;top:232.00px;left:-509.20px;width:2000px;text-align:center;">10</div><div class="t" style="font-family:'Liberation Sans';font-size:14.75px;line-height:14.75px;font-weight:700;color:#fafafa;top:232.00px;left:-428.00px;width:2000px;text-align:center;">15</div><div class="t" style="font-family:'Liberation Sans';font-size:14.75px;line-height:14.75px;font-weight:700;color:#fafafa;top:232.00px;left:-346.80px;width:2000px;text-align:center;">20</div><div class="t" style="font-family:'Liberation Sans';font-size:14.75px;line-height:14.75px;font-weight:700;color:#fafafa;top:232.00px;left:-265.60px;width:2000px;text-align:center;">30</div><div class="t" style="font-family:'Liberation Sans';font-size:14.75px;line-height:14.75px;font-weight:400;color:#fafafa;top:233.00px;-webkit-text-stroke:0.2px #fafafa;left:801.10px;">7</div><div class="t" style="font-family:'Liberation Sans';font-size:14.75px;line-height:14.75px;font-weight:400;color:#fafafa;top:233.00px;letter-spacing:-0.875px;-webkit-text-stroke:0.2px #fafafa;left:1216.00px;">671</div><div class="t" style="font-family:'Liberation Sans';font-size:25.29px;line-height:25.29px;font-weight:700;color:#fafafa;top:332.00px;letter-spacing:-1.260px;left:373.00px;">Your Projected Growth</div><div class="t" style="font-family:'Liberation Sans';font-size:14.75px;line-height:14.75px;font-weight:400;color:#a3a3a3;top:360.00px;letter-spacing:0.120px;left:373.00px;">A visualization of your potential net worth over time, including historical data.</div><div class="t" style="font-family:'Liberation Sans';font-size:14.75px;line-height:14.75px;font-weight:700;color:#fafafa;top:352.00px;letter-spacing:-0.471px;left:1513.70px;">Show History</div><div class="t" style="font-family:'Liberation Sans';font-size:12.64px;line-height:12.64px;font-weight:400;color:#a3a3a3;top:404.00px;left:-561.40px;width:1000px;text-align:right;">€220.00K</div><div class="t" style="font-family:'Liberation Sans';font-size:12.64px;line-height:12.64px;font-weight:400;color:#a3a3a3;top:483.00px;left:-561.40px;width:1000px;text-align:right;">€165.00K</div><div class="t" style="font-family:'Liberation Sans';font-size:12.64px;line-height:12.64px;font-weight:400;color:#a3a3a3;top:566.00px;left:-561.40px;width:1000px;text-align:right;">€110.00K</div><div class="t" style="font-family:'Liberation Sans';font-size:12.64px;line-height:12.64px;font-weight:400;color:#a3a3a3;top:649.00px;left:-561.40px;width:1000px;text-align:right;">€55.00K</div><div class="t" style="font-family:'Liberation Sans';font-size:12.64px;line-height:12.64px;font-weight:400;color:#a3a3a3;top:732.00px;left:-561.40px;width:1000px;text-align:right;">€0.00</div><div class="t" style="font-family:'Liberation Sans';font-size:12.64px;line-height:12.64px;font-weight:400;color:#a3a3a3;top:745.00px;left:-534.60px;width:2000px;text-align:center;">Feb 21</div><div class="t" style="font-family:'Liberation Sans';font-size:12.64px;line-height:12.64px;font-weight:400;color:#a3a3a3;top:745.00px;left:-491.50px;width:2000px;text-align:center;">Sep 21</div><div class="t" style="font-family:'Liberation Sans';font-size:12.64px;line-height:12.64px;font-weight:400;color:#a3a3a3;top:745.00px;left:-448.30px;width:2000px;text-align:center;">Apr 22</div><div class="t" style="font-family:'Liberation Sans';font-size:12.64px;line-height:12.64px;font-weight:400;color:#a3a3a3;top:745.00px;left:-398.60px;width:2000px;text-align:center;">Dec 22</div><div class="t" style="font-family:'Liberation Sans';font-size:12.64px;line-height:12.64px;font-weight:400;color:#a3a3a3;top:745.00px;left:-349.20px;width:2000px;text-align:center;">Aug 23</div><div class="t" style="font-family:'Liberation Sans';font-size:12.64px;line-height:12.64px;font-weight:400;color:#a3a3a3;top:745.00px;left:-299.60px;width:2000px;text-align:center;">Apr 24</div><div class="t" style="font-family:'Liberation Sans';font-size:12.64px;line-height:12.64px;font-weight:400;color:#a3a3a3;top:745.00px;left:-250.00px;width:2000px;text-align:center;">Dec 24</div><div class="t" style="font-family:'Liberation Sans';font-size:12.64px;line-height:12.64px;font-weight:400;color:#a3a3a3;top:745.00px;left:-206.50px;width:2000px;text-align:center;">Jul 25</div><div class="t" style="font-family:'Liberation Sans';font-size:12.64px;line-height:12.64px;font-weight:400;color:#a3a3a3;top:745.00px;left:-163.60px;width:2000px;text-align:center;">Jan 26</div><div class="t" style="font-family:'Liberation Sans';font-size:12.64px;line-height:12.64px;font-weight:400;color:#a3a3a3;top:745.00px;left:-113.70px;width:2000px;text-align:center;">Sep 26</div><div class="t" style="font-family:'Liberation Sans';font-size:12.64px;line-height:12.64px;font-weight:400;color:#a3a3a3;top:745.00px;left:-64.60px;width:2000px;text-align:center;">May 27</div><div class="t" style="font-family:'Liberation Sans';font-size:12.64px;line-height:12.64px;font-weight:400;color:#a3a3a3;top:745.00px;left:-14.70px;width:2000px;text-align:center;">Jan 28</div><div class="t" style="font-family:'Liberation Sans';font-size:12.64px;line-height:12.64px;font-weight:400;color:#a3a3a3;top:745.00px;left:34.40px;width:2000px;text-align:center;">Sep 28</div><div class="t" style="font-family:'Liberation Sans';font-size:12.64px;line-height:12.64px;font-weight:400;color:#a3a3a3;top:745.00px;left:84.00px;width:2000px;text-align:center;">May 29</div><div class="t" style="font-family:'Liberation Sans';font-size:12.64px;line-height:12.64px;font-weight:400;color:#a3a3a3;top:745.00px;left:133.50px;width:2000px;text-align:center;">Jan 30</div><div class="t" style="font-family:'Liberation Sans';font-size:12.64px;line-height:12.64px;font-weight:400;color:#a3a3a3;top:745.00px;left:183.10px;width:2000px;text-align:center;">Sep 30</div><div class="t" style="font-family:'Liberation Sans';font-size:12.64px;line-height:12.64px;font-weight:400;color:#a3a3a3;top:745.00px;left:226.40px;width:2000px;text-align:center;">Apr 31</div><div class="t" style="font-family:'Liberation Sans';font-size:12.64px;line-height:12.64px;font-weight:400;color:#a3a3a3;top:745.00px;left:276.00px;width:2000px;text-align:center;">Dec 31</div><div class="t" style="font-family:'Liberation Sans';font-size:12.64px;line-height:12.64px;font-weight:400;color:#a3a3a3;top:745.00px;left:325.40px;width:2000px;text-align:center;">Aug 32</div><div class="t" style="font-family:'Liberation Sans';font-size:12.64px;line-height:12.64px;font-weight:400;color:#a3a3a3;top:745.00px;left:375.00px;width:2000px;text-align:center;">Apr 33</div><div class="t" style="font-family:'Liberation Sans';font-size:12.64px;line-height:12.64px;font-weight:400;color:#a3a3a3;top:745.00px;left:424.40px;width:2000px;text-align:center;">Dec 33</div><div class="t" style="font-family:'Liberation Sans';font-size:12.64px;line-height:12.64px;font-weight:400;color:#a3a3a3;top:745.00px;left:473.80px;width:2000px;text-align:center;">Aug 34</div><div class="t" style="font-family:'Liberation Sans';font-size:12.64px;line-height:12.64px;font-weight:400;color:#a3a3a3;top:745.00px;left:523.50px;width:2000px;text-align:center;">Apr 35</div><div class="t" style="font-family:'Liberation Sans';font-size:12.64px;line-height:12.64px;font-weight:400;color:#a3a3a3;top:745.00px;left:572.90px;width:2000px;text-align:center;">Dec 35</div><div class="t" style="font-family:'Liberation Sans';font-size:12.64px;line-height:12.64px;font-weight:400;color:#fafafa;top:782.00px;letter-spacing:0.001px;-webkit-text-stroke:0.2px #fafafa;left:792.70px;">Initial Capital</div><div class="t" style="font-family:'Liberation Sans';font-size:12.64px;line-height:12.64px;font-weight:400;color:#fafafa;top:782.00px;letter-spacing:0.108px;-webkit-text-stroke:0.2px #fafafa;left:895.20px;">Contributions</div><div class="t" style="font-family:'Liberation Sans';font-size:12.64px;line-height:12.64px;font-weight:400;color:#fafafa;top:782.00px;letter-spacing:-0.034px;-webkit-text-stroke:0.2px #fafafa;left:1001.50px;">Growth</div><div class="t" style="font-family:'Liberation Sans';font-size:12.64px;line-height:12.64px;font-weight:400;color:#fafafa;top:782.00px;letter-spacing:0.093px;-webkit-text-stroke:0.2px #fafafa;left:1072.40px;">Historical Net Worth</div><div class="t" style="font-family:'Liberation Sans';font-size:14.75px;line-height:14.75px;font-weight:400;color:#a3a3a3;top:828.00px;letter-spacing:-0.132px;left:-427.37px;width:2000px;text-align:center;">Ending Balance</div><div class="t" style="font-family:'Liberation Sans';font-size:21.07px;line-height:21.07px;font-weight:700;color:#fafafa;top:848.00px;letter-spacing:-0.070px;left:-427.33px;width:2000px;text-align:center;">€207,078</div><div class="t" style="font-family:'Liberation Sans';font-size:14.75px;line-height:14.75px;font-weight:400;color:#a3a3a3;top:828.00px;letter-spacing:0.117px;left:-12.64px;width:2000px;text-align:center;">Total Contributions</div><div class="t" style="font-family:'Liberation Sans';font-size:21.07px;line-height:21.07px;font-weight:700;color:#fafafa;top:848.00px;letter-spacing:0.594px;left:-12.40px;width:2000px;text-align:center;">€80,520</div><div class="t" style="font-family:'Liberation Sans';font-size:14.75px;line-height:14.75px;font-weight:400;color:#a3a3a3;top:828.00px;letter-spacing:-0.029px;left:402.69px;width:2000px;text-align:center;">Total Interest Earned</div><div class="t" style="font-family:'Liberation Sans';font-size:21.07px;line-height:21.07px;font-weight:700;color:#fafafa;top:848.00px;letter-spacing:0.123px;left:402.76px;width:2000px;text-align:center;">€81,645</div><div class="t" style="font-family:'Liberation Sans';font-size:25.29px;line-height:25.29px;font-weight:700;color:#fafafa;top:946.00px;letter-spacing:-1.176px;left:373.60px;">Yearly Breakdown</div><div class="t" style="font-family:'Liberation Sans';font-size:14.75px;line-height:14.75px;font-weight:400;color:#a3a3a3;top:980.00px;letter-spacing:0.167px;left:373.00px;">A year-by-year summary of your projected net worth.</div><div class="t" style="font-family:'Liberation Sans';font-size:14.75px;line-height:14.75px;font-weight:400;color:#a3a3a3;top:1038.00px;letter-spacing:-0.053px;-webkit-text-stroke:0.2px #a3a3a3;left:388.90px;">Year</div><div class="t" style="font-family:'Liberation Sans';font-size:14.75px;line-height:14.75px;font-weight:400;color:#a3a3a3;top:1038.00px;letter-spacing:0.201px;-webkit-text-stroke:0.2px #a3a3a3;left:-129.40px;width:1000px;text-align:right;">Total Contributions</div><div class="t" style="font-family:'Liberation Sans';font-size:14.75px;line-height:14.75px;font-weight:400;color:#a3a3a3;top:1038.00px;letter-spacing:0.042px;-webkit-text-stroke:0.2px #a3a3a3;left:256.34px;width:1000px;text-align:right;">Total Interest Earned</div><div class="t" style="font-family:'Liberation Sans';font-size:14.75px;line-height:14.75px;font-weight:400;color:#a3a3a3;top:1038.00px;letter-spacing:0.101px;-webkit-text-stroke:0.2px #a3a3a3;left:586.10px;width:1000px;text-align:right;">End of Year Total</div><div class="t" style="font-family:'Liberation Sans';font-size:14.75px;line-height:14.75px;font-weight:700;color:#fafafa;top:1089.00px;left:388.90px;">2025</div><div class="t" style="font-family:'Liberation Mono';font-size:13.0px;line-height:13.0px;font-weight:400;color:#c4c4c4;top:1090.00px;left:-129.60px;width:1000px;text-align:right;">€0</div><div class="t" style="font-family:'Liberation Mono';font-size:13.0px;line-height:13.0px;font-weight:400;color:#c4c4c4;top:1090.00px;left:256.30px;width:1000px;text-align:right;">€0</div><div class="t" style="font-family:'Liberation Mono';font-size:13.0px;line-height:13.0px;font-weight:700;color:#3b82f6;top:1090.00px;left:586.00px;width:1000px;text-align:right;">€44,914</div><div class="t" style="font-family:'Liberation Sans';font-size:14.75px;line-height:14.75px;font-weight:700;color:#fafafa;top:1142.00px;left:388.90px;">2026</div><div class="t" style="font-family:'Liberation Mono';font-size:13.0px;line-height:13.0px;font-weight:400;color:#c4c4c4;top:1143.00px;left:-129.60px;width:1000px;text-align:right;">€8,052</div><div class="t" style="font-family:'Liberation Mono';font-size:13.0px;line-height:13.0px;font-weight:400;color:#c4c4c4;top:1143.00px;left:256.30px;width:1000px;text-align:right;">€3,559</div><div class="t" style="font-family:'Liberation Mono';font-size:13.0px;line-height:13.0px;font-weight:700;color:#3b82f6;top:1143.00px;left:586.00px;width:1000px;text-align:right;">€56,524</div><div class="t" style="font-family:'Liberation Sans';font-size:14.75px;line-height:14.75px;font-weight:700;color:#fafafa;top:1195.00px;left:388.90px;">2027</div><div class="t" style="font-family:'Liberation Mono';font-size:13.0px;line-height:13.0px;font-weight:400;color:#c4c4c4;top:1196.00px;left:-129.60px;width:1000px;text-align:right;">€16,104</div><div class="t" style="font-family:'Liberation Mono';font-size:13.0px;line-height:13.0px;font-weight:400;color:#c4c4c4;top:1196.00px;left:256.30px;width:1000px;text-align:right;">€7,957</div><div class="t" style="font-family:'Liberation Mono';font-size:13.0px;line-height:13.0px;font-weight:700;color:#3b82f6;top:1196.00px;left:586.00px;width:1000px;text-align:right;">€68,974</div><div class="t" style="font-family:'Liberation Sans';font-size:14.75px;line-height:14.75px;font-weight:700;color:#fafafa;top:1248.00px;left:388.90px;">2028</div><div class="t" style="font-family:'Liberation Mono';font-size:13.0px;line-height:13.0px;font-weight:400;color:#c4c4c4;top:1249.00px;left:-129.60px;width:1000px;text-align:right;">€24,156</div><div class="t" style="font-family:'Liberation Mono';font-size:13.0px;line-height:13.0px;font-weight:400;color:#c4c4c4;top:1249.00px;left:256.30px;width:1000px;text-align:right;">€13,255</div><div class="t" style="font-family:'Liberation Mono';font-size:13.0px;line-height:13.0px;font-weight:700;color:#3b82f6;top:1249.00px;left:586.00px;width:1000px;text-align:right;">€82,324</div>
</body></html>
